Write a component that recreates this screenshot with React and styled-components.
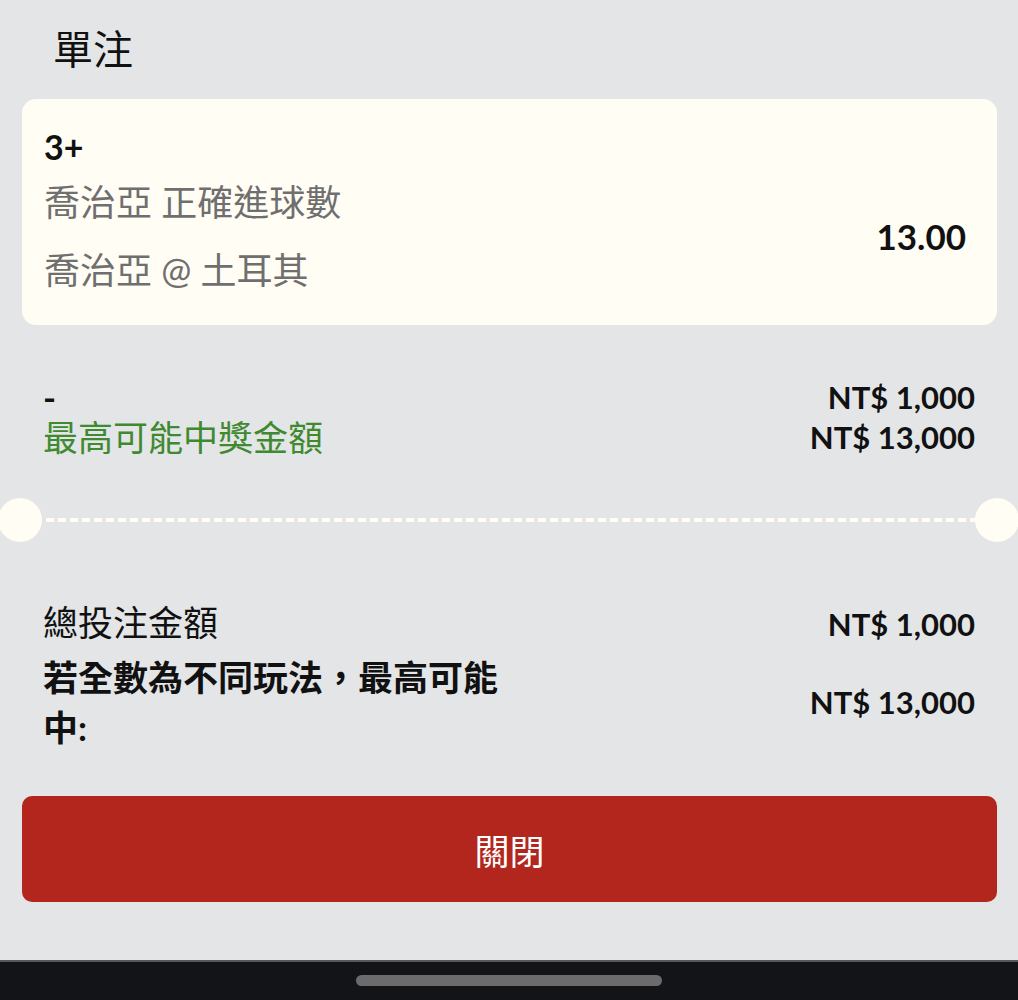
import styled, { createGlobalStyle } from "styled-components";

const GlobalStyle = createGlobalStyle`
	html, body {
		margin: 0;
		padding: 0;
		background: #e4e5e7;
	}
	* {
		box-sizing: border-box;
	}
`;

const Page = styled.div`
	width: 1018px;
	height: 1000px;
	overflow: hidden;
	display: flex;
	flex-direction: column;
	background: #e4e5e7;
	font-family: Lato, "Noto Sans CJK TC", "Noto Sans", sans-serif;
	color: #111;
`;

const Title = styled.h1`
	margin: 25px 0 0 53px;
	font-size: 40px;
	line-height: 48px;
	font-weight: 400;
`;

const Card = styled.div`
	margin: 26px 21px 0 22px;
	height: 226px;
	padding: 26px 31px 27px 22px;
	background: #fffdf4;
	border-radius: 14px;
	display: grid;
	grid-template-columns: 1fr auto;
	grid-template-rows: 44px 56px 56px;
	row-gap: 5px;
`;

const Pick = styled.div`
	font-size: 34px;
	line-height: 44px;
	font-weight: 700;
`;

const Market = styled.div`
	grid-column: 1;
	font-size: 36px;
	line-height: 56px;
	color: #6f6f6f;
	margin-top: ${(p) => p.$offset || 0}px;
`;

const Odds = styled.div`
	grid-column: 2;
	grid-row: 2 / span 2;
	align-self: center;
	font-size: 35px;
	font-weight: 700;
	margin-top: 6px;
`;

const Section = styled.div`
	padding: 0 43px;
	margin-top: ${(p) => p.$top}px;
	display: flex;
	flex-direction: column;
	gap: ${(p) => p.$gap || 0}px;
`;

const Row = styled.div`
	display: flex;
	align-items: center;
	justify-content: space-between;
	min-height: ${(p) => p.$h || 40}px;
`;

const Label = styled.div`
	font-size: 35px;
	line-height: ${(p) => p.$lh || 40}px;
	font-weight: ${(p) => (p.$bold ? 700 : 400)};
	color: ${(p) => p.$color || "#111"};
	max-width: ${(p) => p.$max || "none"};
`;

const Amount = styled.div`
	font-size: 31px;
	font-weight: 700;
	line-height: 40px;
	white-space: nowrap;
	margin-top: ${(p) => p.$offset || 0}px;
`;

const Separator = styled.div`
	margin: 41px -1px 0 -2px;
	height: 44px;
	display: flex;
	align-items: center;
`;

const Notch = styled.div`
	width: 44px;
	height: 44px;
	border-radius: 50%;
	background: #fffdf4;
	flex-shrink: 0;
`;

const DashLine = styled.div`
	flex: 1;
	height: 4px;
	background: repeating-linear-gradient(
		90deg,
		transparent 0 4px,
		#fffdf4 4px 12px
	);
`;

const CloseButton = styled.button`
	margin: 44px 21px 0 22px;
	height: 106px;
	border: none;
	border-radius: 10px;
	background: #b3261e;
	color: #fff;
	font-family: inherit;
	font-size: 35px;
	cursor: pointer;
`;

const HomeBar = styled.div`
	margin-top: auto;
	height: 40px;
	background: #131418;
	border-top: 2px solid #55575a;
	display: flex;
	justify-content: center;
	padding-top: 13px;
`;

const Handle = styled.div`
	width: 306px;
	height: 11px;
	border-radius: 6px;
	background: #6b6b6e;
`;

function App() {
	return (
		<Page>
			<GlobalStyle />
			<Title>單注</Title>

			<Card>
				<Pick>3+</Pick>
				<Market>喬治亞 正確進球數</Market>
				<Odds>13.00</Odds>
				<Market $offset={7}>喬治亞 @ 土耳其</Market>
			</Card>

			<Section $top={52}>
				<Row>
					<Label $bold>-</Label>
					<Amount>NT$ 1,000</Amount>
				</Row>
				<Row>
					<Label $color={"#3f8a30"}>最高可能中獎金額</Label>
					<Amount>NT$ 13,000</Amount>
				</Row>
			</Section>

			<Separator>
				<Notch />
				<DashLine />
				<Notch />
			</Separator>

			<Section $top={58} $gap={8}>
				<Row $h={44}>
					<Label $lh={44}>總投注金額</Label>
					<Amount $offset={4}>NT$ 1,000</Amount>
				</Row>
				<Row $h={100}>
					<Label $bold $lh={50} $max={"466px"}>
						若全數為不同玩法，最高可能中:
					</Label>
					<Amount>NT$ 13,000</Amount>
				</Row>
			</Section>

			<CloseButton>關閉</CloseButton>

			<HomeBar>
				<Handle />
			</HomeBar>
		</Page>
	);
}

export default App;
